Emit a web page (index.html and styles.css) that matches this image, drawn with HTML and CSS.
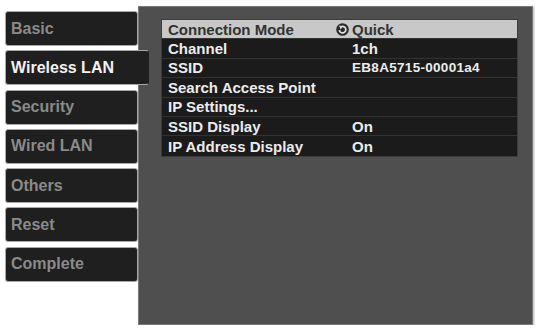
FILE: index.html
```html
<!DOCTYPE html>
<html lang="en">

<head>
    <meta charset="UTF-8" />
    <meta name="viewport" content="width=device-width, initial-scale=1.0" />
    <title>Network Settings - Wireless LAN</title>
    <link rel="stylesheet" href="styles.css">
</head>

<body>
    <div class="tela">
        <div class="abas">
            <div class="aba">Basic</div>
            <div class="aba ativa">Wireless LAN</div>
            <div class="aba">Security</div>
            <div class="aba">Wired LAN</div>
            <div class="aba">Others</div>
            <div class="aba">Reset</div>
            <div class="aba">Complete</div>
        </div>
        <div class="painel">
            <div class="lista">
                <div class="linha selecionada">
                    <span>Connection Mode</span>
                    <span class="valor">
                        <svg class="icone" width="13" height="13" viewBox="0 0 12 12">
                            <circle cx="6" cy="6" r="5.8" fill="#2b2b2b" />
                            <path d="M3.1 6.5 A3 3 0 1 0 4.7 3.5" fill="none" stroke="#e0e0e0" stroke-width="1.6" />
                            <path d="M2.8 2.3 L6.2 3.1 L4.3 5.9 Z" fill="#e0e0e0" />
                        </svg>Quick
                    </span>
                </div>
                <div class="linha"><span>Channel</span><span class="valor">1ch</span></div>
                <div class="linha"><span>SSID</span><span class="valor pequeno">EB8A5715-00001a4</span></div>
                <div class="linha"><span>Search Access Point</span><span></span></div>
                <div class="linha"><span>IP Settings...</span><span></span></div>
                <div class="linha"><span>SSID Display</span><span class="valor">On</span></div>
                <div class="linha"><span>IP Address Display</span><span class="valor">On</span></div>
            </div>
        </div>
    </div>
</body>

</html>
```

FILE: styles.css
```css
body {
    margin: 0;
    background-color: #fff;
    font-family: 'Liberation Sans', Arial, sans-serif;
    font-weight: bold;
}

.tela {
    display: flex;
    padding: 6px 0 0 5px;
}

.abas {
    display: flex;
    flex-direction: column;
    gap: 4.3px;
    width: 133px;
    padding-top: 5px;
}

.aba {
    box-sizing: border-box;
    width: 133px;
    height: 35px;
    padding-left: 5px;
    display: flex;
    align-items: center;
    background-color: #1f1f1f;
    border: 1px solid #a8a8a8;
    border-radius: 3px;
    color: #8a8a8a;
    font-size: 16px;
}

.aba.ativa {
    width: 144px;
    color: #f2f2f2;
    position: relative;
    z-index: 1;
    border-right-color: #1f1f1f;
}

.painel {
    box-sizing: border-box;
    width: 395px;
    height: 319px;
    background-color: #4f4f4f;
    border: 1px solid #7a7a7a;
    box-shadow: 1px 1px 2px #b0b0b0;
    padding: 12px 0 0 22px;
}

.lista {
    width: 357px;
    background-color: #1b1b1b;
    border: 1px solid #3c3c3c;
    box-sizing: border-box;
}

.linha {
    display: grid;
    grid-template-columns: 184px 1fr;
    align-items: center;
    height: 19.4px;
    padding-left: 6px;
    box-sizing: border-box;
    border-bottom: 1px solid #333;
    color: #ececec;
    font-size: 15px;
}

.linha:last-child {
    border-bottom: none;
}

.linha.selecionada {
    background-color: #c8c8c8;
    color: #333;
}

.valor {
    display: flex;
    align-items: center;
}

.icone {
    margin-left: -16px;
    margin-right: 3px;
}

.pequeno {
    font-size: 13.5px;
    letter-spacing: 0.3px;
}
```
